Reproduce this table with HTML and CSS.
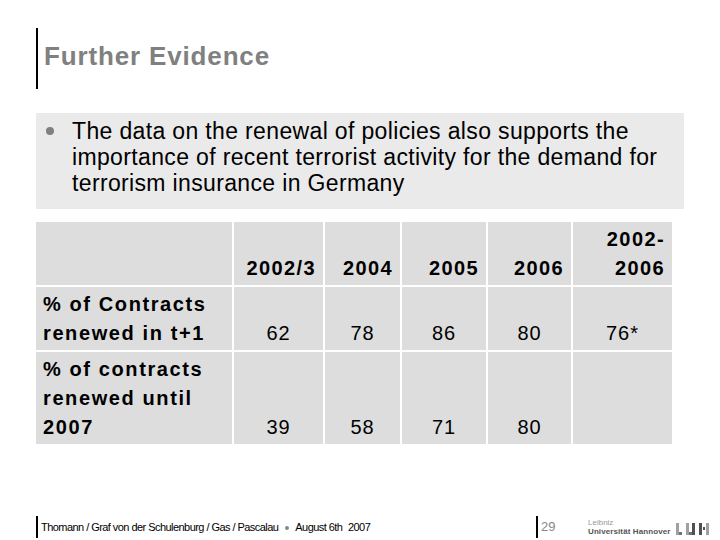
FILE: index.html
```html
<!DOCTYPE html>
<html>
<head>
<meta charset="utf-8">
<link rel="stylesheet" href="styles.css">
</head>
<body>
<div class="slide">
  <div class="title-row">
    <h1 class="title">Further Evidence</h1>
  </div>

  <div class="bullet-box">
    <span class="dot"></span>
    <p class="bullet-text">The data on the renewal of policies also supports the importance of recent terrorist activity for the demand for terrorism insurance in Germany</p>
  </div>

  <div class="data-table">
    <div class="cell"></div>
    <div class="cell head">2002/3</div>
    <div class="cell head">2004</div>
    <div class="cell head">2005</div>
    <div class="cell head">2006</div>
    <div class="cell head">2002-<br>2006</div>

    <div class="cell label">% of Contracts renewed in t+1</div>
    <div class="cell num">62</div>
    <div class="cell num">78</div>
    <div class="cell num">86</div>
    <div class="cell num">80</div>
    <div class="cell num">76*</div>

    <div class="cell label">% of contracts renewed until 2007</div>
    <div class="cell num">39</div>
    <div class="cell num">58</div>
    <div class="cell num">71</div>
    <div class="cell num">80</div>
    <div class="cell num"></div>
  </div>

  <div class="footer">
    <div class="foot-left">Thomann / Graf von der Schulenburg / Gas / Pascalau<span class="fdot"></span>August 6th <span class="year">2007</span></div>
    <div class="foot-page">29</div>
    <div class="logo">
      <div class="logo-text">
        <span class="logo-small">Leibniz</span>
        <span class="logo-big">Universität Hannover</span>
      </div>
      <svg class="logo-mark" width="36" height="12" viewBox="0 0 36 12">
        <rect x="0" y="0" width="3" height="12" fill="#a0a0a0"/>
        <rect x="3" y="9" width="3" height="3" fill="#707070"/>
        <rect x="10" y="0" width="3" height="12" fill="#a0a0a0"/>
        <rect x="13" y="9" width="3" height="3" fill="#707070"/>
        <rect x="16" y="0" width="3" height="12" fill="#505050"/>
        <rect x="23" y="0" width="3" height="12" fill="#505050"/>
        <rect x="27" y="4" width="2" height="3" fill="#505050"/>
        <rect x="30" y="0" width="3" height="12" fill="#a0a0a0"/>
      </svg>
    </div>
  </div>
</div>
</body>
</html>
```

FILE: styles.css
```css
html, body {
  margin: 0;
  padding: 0;
  background: #ffffff;
}

.slide {
  width: 720px;
  height: 540px;
  box-sizing: border-box;
  padding: 28px 0 0 36px;
  font-family: "Liberation Sans", Arial, sans-serif;
  color: #000;
  overflow: hidden;
}

.title-row {
  border-left: 2px solid #000;
  height: 61px;
  box-sizing: border-box;
  padding: 13px 0 0 6px;
}

.title {
  margin: 0;
  font-size: 26px;
  line-height: 30px;
  font-weight: bold;
  color: #808080;
  letter-spacing: 0.85px;
}

.bullet-box {
  margin-top: 24px;
  width: 648px;
  height: 96px;
  background: #eaeaea;
  box-sizing: border-box;
  padding: 5px 0 0 10px;
  display: flex;
  align-items: flex-start;
}

.dot {
  flex: none;
  width: 8px;
  height: 8px;
  border-radius: 50%;
  background: #808080;
  margin-top: 9px;
}

.bullet-text {
  margin: 0 0 0 18px;
  width: 600px;
  font-size: 23px;
  line-height: 26px;
  letter-spacing: 0.35px;
}

.data-table {
  margin-top: 13px;
  display: grid;
  grid-template-columns: 196px 89px 75px 84px 83px 99px;
  grid-template-rows: 63px 63px 92px;
  gap: 2px;
  width: 636px;
}

.cell {
  background: #dddddd;
  display: flex;
  flex-direction: column;
  justify-content: flex-end;
  box-sizing: border-box;
  padding: 0 0 2px 0;
  font-size: 20px;
  line-height: 29px;
}

.head {
  font-weight: bold;
  text-align: right;
  padding-right: 7px;
  letter-spacing: 1.4px;
}

.label {
  font-weight: bold;
  padding-left: 7px;
  letter-spacing: 1.6px;
}

.num {
  text-align: center;
  letter-spacing: 1px;
}

.footer {
  margin-top: 72px;
  height: 22px;
  display: flex;
  align-items: center;
}

.foot-left {
  flex: none;
  border-left: 2px solid #000;
  height: 22px;
  box-sizing: border-box;
  padding-left: 3px;
  width: 500px;
  font-size: 11px;
  line-height: 22px;
  letter-spacing: -0.55px;
  color: #000;
  white-space: nowrap;
}

.year {
  margin-left: 3px;
}

.fdot {
  display: inline-block;
  width: 4px;
  height: 4px;
  border-radius: 50%;
  background: #888;
  vertical-align: middle;
  margin: 0 6px 0 7px;
}

.foot-page {
  flex: none;
  border-left: 2px solid #000;
  height: 22px;
  box-sizing: border-box;
  padding-left: 3px;
  width: 52px;
  font-size: 13px;
  line-height: 22px;
  color: #888;
}

.logo {
  flex: none;
  display: flex;
  align-items: flex-end;
  gap: 6px;
  white-space: nowrap;
}

.logo-text {
  display: flex;
  flex-direction: column;
  line-height: 9px;
}

.logo-small {
  font-size: 8px;
  color: #999;
}

.logo-big {
  font-size: 8px;
  font-weight: bold;
  color: #555;
  letter-spacing: 0.1px;
}

.logo-mark {
  display: block;
  margin-bottom: 1px;
}
```
